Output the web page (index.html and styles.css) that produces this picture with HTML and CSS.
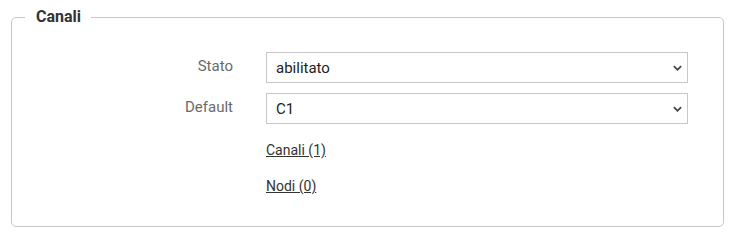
FILE: index.html
```html
<!DOCTYPE html>
<html lang="it">
<head>
<meta charset="utf-8">
<link rel="stylesheet" href="styles.css">
</head>
<body>
<fieldset class="box">
  <legend class="box-title">Canali</legend>
  <div class="form">
    <label class="lbl">Stato</label>
    <div class="sel"><span class="sel-text">abilitato</span><svg class="chev" viewBox="0 0 10 6" width="10" height="6"><path d="M1 1 L5 5 L9 1" fill="none" stroke="#444" stroke-width="2"/></svg></div>
    <label class="lbl">Default</label>
    <div class="sel"><span class="sel-text">C1</span><svg class="chev" viewBox="0 0 10 6" width="10" height="6"><path d="M1 1 L5 5 L9 1" fill="none" stroke="#444" stroke-width="2"/></svg></div>
    <span></span>
    <div class="links">
      <a class="lnk" href="#">Canali (1)</a>
      <a class="lnk" href="#">Nodi (0)</a>
    </div>
  </div>
</fieldset>
</body>
</html>
```

FILE: styles.css
```css
html, body {
  margin: 0;
  padding: 0;
  background: #fff;
  font-family: Roboto, "Liberation Sans", sans-serif;
}
body {
  padding: 7px 11px 0 11px;
}
.box {
  margin: 0;
  border: 1px solid #c8c8c8;
  border-radius: 5px;
  padding: 25px 35px 0 0;
  min-width: 0;
  height: 220px;
  box-sizing: border-box;
}
.box-title {
  margin-left: 13px;
  padding: 0 10px 0 11px;
  font-size: 16px;
  font-weight: bold;
  line-height: 20px;
  color: #333;
}
.form {
  display: grid;
  grid-template-columns: 221px 422px;
  column-gap: 33px;
  row-gap: 10px;
  align-items: start;
}
.lbl {
  text-align: right;
  font-size: 15px;
  color: #6a6a6a;
  line-height: 20px;
  padding-top: 4px;
}
.sel {
  height: 31px;
  box-sizing: border-box;
  border: 1px solid #c8c8c8;
  display: flex;
  align-items: center;
  justify-content: space-between;
  padding: 0 4px 0 9px;
  background: #fff;
}
.sel-text {
  font-size: 15px;
  color: #222;
}
.chev {
  width: 9px;
  height: 6px;
  margin-right: 1px;
}
.links {
  display: flex;
  flex-direction: column;
  gap: 20px;
  padding-top: 8px;
  align-items: flex-start;
}
.lnk {
  font-size: 14px;
  line-height: 16px;
  color: #333;
  text-decoration: underline;
}
```
